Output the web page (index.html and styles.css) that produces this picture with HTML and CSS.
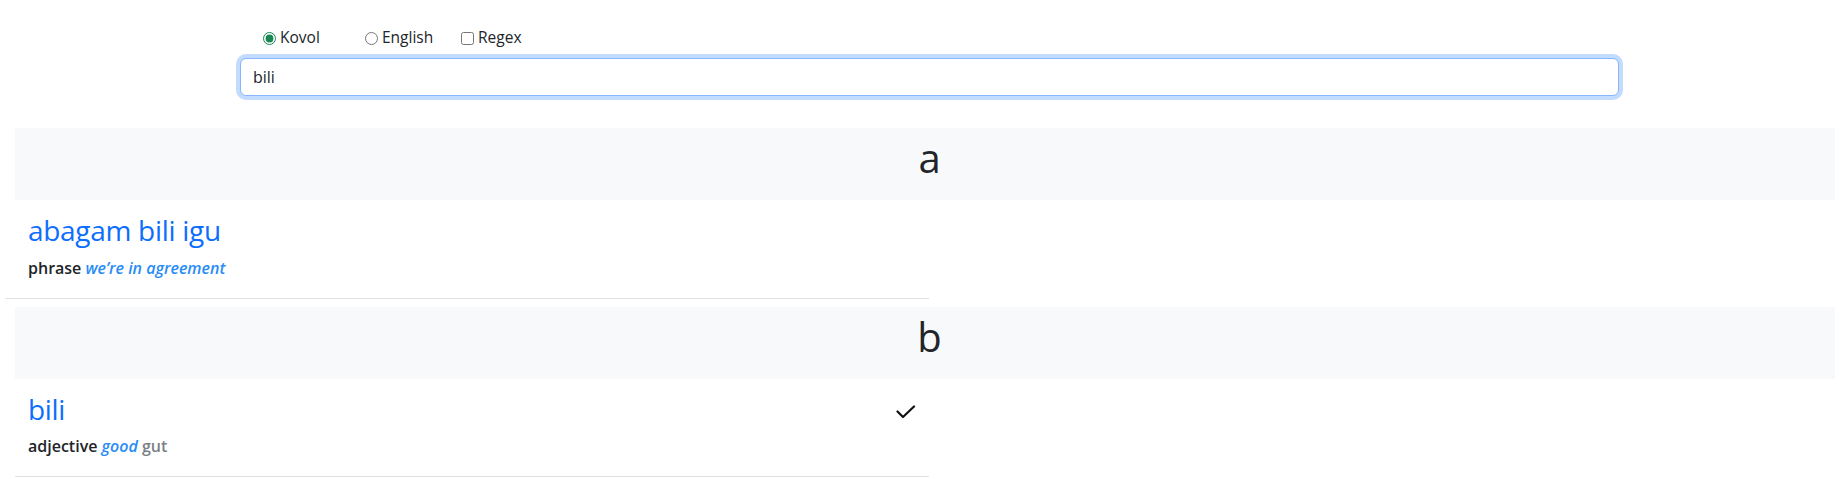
FILE: index.html
```html
<!DOCTYPE html>
<html lang="en">
<head>
<meta charset="utf-8">
<title>Kovol dictionary</title>
<link rel="stylesheet" href="styles.css">
</head>
<body>
<div class="page">
  <form class="search">
    <div class="modes">
      <label class="mode mode-kovol"><input type="radio" name="lang" checked><span>Kovol</span></label>
      <label class="mode mode-english"><input type="radio" name="lang"><span>English</span></label>
      <label class="mode"><input type="checkbox"><span>Regex</span></label>
    </div>
    <input class="query" type="text" value="bili">
  </form>

  <section class="group">
    <h2 class="letter">a</h2>
    <ul class="entries">
      <li class="entry entry-first">
        <div class="entry-body">
          <h3 class="headword">abagam bili igu</h3>
          <p class="sense"><b class="pos">phrase</b> <i class="gloss">we’re in agreement</i></p>
        </div>
      </li>
    </ul>
  </section>

  <section class="group">
    <h2 class="letter">b</h2>
    <ul class="entries">
      <li class="entry">
        <div class="entry-body">
          <h3 class="headword">bili</h3>
          <p class="sense"><b class="pos">adjective</b> <i class="gloss">good</i> <span class="german">gut</span></p>
        </div>
        <svg class="exact" width="20" height="14" viewBox="0 0 20 14" aria-label="exact match">
          <polyline points="1.5,6.5 7,12 18,1.5" fill="none" stroke="#111" stroke-width="2.2" stroke-linecap="round" stroke-linejoin="round"/>
        </svg>
      </li>
    </ul>
  </section>
</div>
</body>
</html>
```

FILE: styles.css
```css
html, body {
  margin: 0;
  padding: 0;
  overflow: hidden;
  background: #fff;
}

body {
  font-family: "Open Sans", "Noto Sans", sans-serif;
  color: #212529;
  font-size: 16px;
  line-height: 1.5;
}

.page {
  width: 1859px;
}

/* search form */
.search {
  width: 1379px;
  margin: 0 auto;
  padding-top: 26px;
}

.modes {
  display: flex;
  align-items: center;
  height: 24px;
  margin-left: 23px;
  margin-bottom: 8px;
  font-size: 15.5px;
}

.mode {
  display: inline-flex;
  align-items: center;
  gap: 4px;
}

.mode-kovol { width: 102px; }
.mode-english { width: 96px; }

.mode input {
  margin: 0;
  width: 13px;
  height: 13px;
  accent-color: #198754;
}

.query {
  display: block;
  box-sizing: border-box;
  width: 100%;
  height: 38px;
  padding: 6px 12px;
  font: inherit;
  font-size: 16px;
  color: #212529;
  border: 1px solid #86b7fe;
  border-radius: 6px;
  outline: none;
  box-shadow: 0 0 0 4px rgba(13, 110, 253, 0.25);
}

/* letter groups */
.group {
  margin-top: 32px;
}

.group + .group {
  margin-top: 8px;
}

.letter {
  margin: 0 15px;
  padding: 6px 0 18px;
  background: #f8f9fa;
  text-align: center;
  font-size: 40px;
  font-weight: 400;
  line-height: 48px;
}

.entries {
  list-style: none;
  margin: 0 0 0 15px;
  padding: 0;
  width: 914px;
}

.entry {
  display: flex;
  justify-content: space-between;
  align-items: flex-start;
  padding: 14px 13px 18px 13px;
  border-bottom: 1px solid #dee2e6;
}

.entry-first {
  margin-left: -10px;
  padding-left: 23px;
}

.headword {
  margin: 0 0 8px;
  font-size: 28px;
  font-weight: 400;
  line-height: 1.2;
  color: #0d6efd;
  letter-spacing: -0.3px;
}

.sense {
  margin: 0;
  font-size: 16px;
  line-height: 24px;
}

.pos {
  font-weight: 600;
  color: #212529;
}

.gloss {
  font-weight: 600;
  color: #2a8cf5;
}

.german {
  font-weight: 600;
  color: #7a7f85;
}

.exact {
  margin-top: 12px;
}
```
